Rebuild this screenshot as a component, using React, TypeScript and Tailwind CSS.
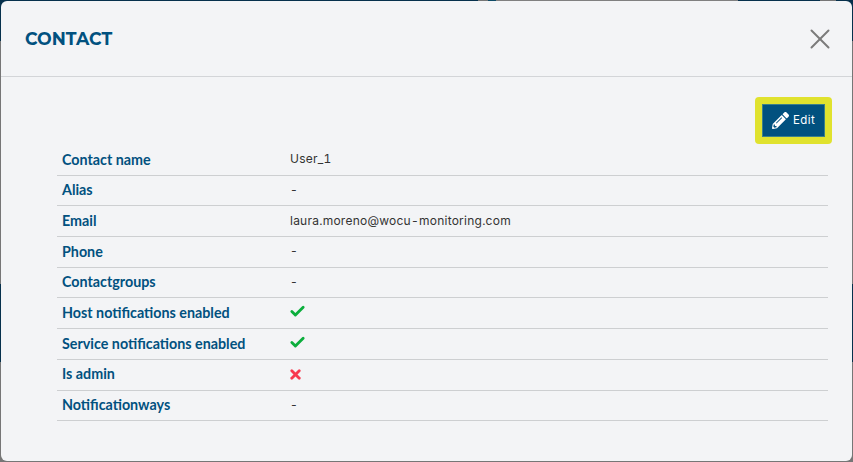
import React from 'react';
import { X, Check } from 'lucide-react';

type Row = { label: string; value: string | 'yes' | 'no' };

const rows: Row[] = [
  { label: 'Contact name', value: 'User_1' },
  { label: 'Alias', value: '-' },
  { label: 'Email', value: 'laura.moreno@wocu-monitoring.com' },
  { label: 'Phone', value: '-' },
  { label: 'Contactgroups', value: '-' },
  { label: 'Host notifications enabled', value: 'yes' },
  { label: 'Service notifications enabled', value: 'yes' },
  { label: 'Is admin', value: 'no' },
  { label: 'Notificationways', value: '-' },
];

const PencilIcon = () => (
  <svg viewBox="0 0 512 512" className="h-[17px] w-[17px] fill-white">
    <path d="M497.9 142.1l-46.1 46.1c-4.7 4.7-12.3 4.7-17 0l-111-111c-4.7-4.7-4.7-12.3 0-17l46.1-46.1c18.7-18.7 49.1-18.7 67.9 0l60.1 60.1c18.8 18.7 18.8 49.1 0 67.9zM284.2 99.8L21.6 362.4.4 483.9c-2.9 16.4 11.4 30.6 27.8 27.8l121.5-21.3 262.6-262.6c4.7-4.7 4.7-12.3 0-17l-111-111c-4.8-4.7-12.4-4.7-17.1 0zM124.1 339.9c-5.5-5.5-5.5-14.3 0-19.8l154-154c5.5-5.5 14.3-5.5 19.8 0s5.5 14.3 0 19.8l-154 154c-5.5 5.5-14.3 5.5-19.8 0zM88 424h48v36.3l-64.5 11.3-31.1-31.1L51.7 376H88v48z" />
  </svg>
);

const Value = ({ value }: { value: Row['value'] }) => {
  if (value === 'yes') return <Check size={17} strokeWidth={4} className="-ml-[1px] -mt-0.5 text-[#0bae3c]" />;
  if (value === 'no') return <X size={15} strokeWidth={4.5} className="-ml-[2px] text-[#f8394f]" />;
  return <span>{value}</span>;
};

export default function App() {
  return (
    <div className="relative h-[462px] w-[853px] overflow-hidden bg-[#767676]">
      {/* page behind the overlay, only its edges show */}
      <div className="flex h-[41px]">
        <div className="w-[478px] bg-[#06304c]" />
        <div className="w-[10px] bg-[#767676]" />
        <div className="w-[8px] bg-[#0d4a66]" />
        <div className="w-[242px] bg-[#808080]" />
        <div className="w-[82px] bg-[#06304c]" />
        <div className="w-[16px] bg-[#767676]" />
        <div className="flex-1 bg-[#06304c]" />
      </div>
      <div className="mt-[243px] h-[78px] bg-[#06304c]" />

      {/* Modal */}
      <div className="absolute left-px top-px flex h-[460px] w-[851px] flex-col rounded-[6px] bg-[#f3f4f6]">
        <header className="flex h-[76px] items-center justify-between border-b border-[#d3d5d8] pl-[24px] pr-[15px]">
          <h2 className="pt-[1px] text-[17.4px] font-bold text-[#01517f] [font-family:Montserrat,'Open_Sans',sans-serif]">CONTACT</h2>
          <X size={34} strokeWidth={1.4} className="text-[#7b7b7b]" />
        </header>

        <div className="pl-[56px] pr-[20px]">
          <div className="mt-[20px] flex justify-end">
            <div className="rounded-[4px] bg-[#e0e22e] p-[7px]">
              <button className="flex h-[33px] w-[63px] items-center justify-center gap-[4px] border border-[#3c7f8a] bg-[#01517f] text-[11.5px] tracking-[0.4px] text-white [font-family:Inter,sans-serif]">
                <PencilIcon />
                Edit
              </button>
            </div>
          </div>

          <div className="mt-[1px] w-[771px]">
            {rows.map((row) => (
              <div key={row.label} className="flex h-[30.7px] items-center border-b border-[#cdcfd1] pb-[1px]">
                <div className="w-[233px] pl-[5px] text-[14.3px] font-bold text-[#01517f] [font-family:Lato,sans-serif]">
                  {row.label}
                </div>
                <div className="text-[12px] tabular-nums tracking-[0.24px] text-[#333] [font-family:Inter,sans-serif]">
                  <Value value={row.value} />
                </div>
              </div>
            ))}
          </div>
        </div>
      </div>
    </div>
  );
}
